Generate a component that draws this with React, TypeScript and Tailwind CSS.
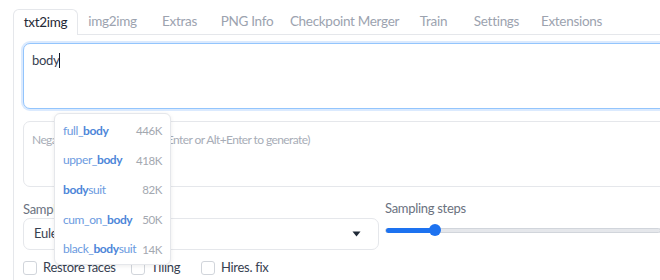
import { useState } from 'react';

const tabs = [
  { name: 'img2img', w: 'w-[69px]' },
  { name: 'Extras', w: 'w-[65px]' },
  { name: 'PNG Info', w: 'w-[70px]' },
  { name: 'Checkpoint Merger', w: 'w-[125px]' },
  { name: 'Train', w: 'w-[53px]' },
  { name: 'Settings', w: 'w-[73px]' },
  { name: 'Extensions', w: 'w-[77px]' },
];

const suggestions = [
  { pre: 'full_', hit: 'body', post: '', count: '446K' },
  { pre: 'upper_', hit: 'body', post: '', count: '418K' },
  { pre: '', hit: 'body', post: 'suit', count: '82K' },
  { pre: 'cum_on_', hit: 'body', post: '', count: '50K' },
  { pre: 'black_', hit: 'body', post: 'suit', count: '14K' },
];

export default function App() {
  const [prompt] = useState('body');

  return (
    <div className="relative w-[660px] h-[280px] overflow-hidden bg-white text-[13px] tracking-[-0.3px] text-[#374151]" style={{ fontFamily: '"Source Sans Pro", Lato, "Noto Sans", sans-serif' }}>
      {/* Tabs */}
      <div className="flex items-end pl-[13px] pt-[9px] w-[900px]">
        <div className="w-[65px] h-[26px] flex items-center justify-center border border-b-0 border-[#e5e7eb] rounded-t-[6px] bg-white text-[#1f2937] text-[13.5px]">
          txt2img
        </div>
        <div className="flex-1 flex items-center h-[26px] border-b border-[#e5e7eb] text-[#9ca3af] text-[13.5px]">
          {tabs.map((t) => (
            <div key={t.name} className={`${t.w} text-center shrink-0`}>{t.name}</div>
          ))}
        </div>
      </div>

      {/* Panel */}
      <div className="ml-[13px] w-[900px] border-l border-[#e5e7eb] pl-[9px] pt-2 h-[260px]">
        <div className="h-[66px] rounded-[7px] border border-[#93c5fd] shadow-[0_0_0_2px_#dbeafe] bg-white px-2 pt-[7px]">
          <span className="text-[#374151]">{prompt}</span>
          <span className="inline-block w-px h-[15px] bg-[#111827] align-[-3px]" />
        </div>

        <div className="mt-[12px] h-[66px] rounded-[7px] border border-[#e5e7eb] bg-white px-2 pt-[9px] text-[12px] tracking-[-0.6px] text-[#a8adb7]">
          Negative prompt (press Ctrl+Enter or Alt+Enter to generate)
        </div>

        <div className="mt-[15px] flex gap-[6px] w-[638px]">
          <div className="w-[356px]">
            <div className="text-[#6b7280] leading-[15px]">Sampling method</div>
            <div className="mt-px h-[32px] rounded-[7px] border border-[#e5e7eb] flex items-center justify-between pl-[10px] pr-[17px]">
              <span>Euler a</span>
              <svg width="9" height="6" viewBox="0 0 9 6"><path d="M0.5 0.5 L8.5 0.5 L4.5 5.5 Z" fill="#1f2937" /></svg>
            </div>
          </div>
          <div className="flex-1">
            <div className="text-[#6b7280] leading-[15px] -mt-[1px]">Sampling steps</div>
            <div className="relative mt-[12px] h-[5px] rounded-full bg-[#e5e7eb] border border-[#d1d5db]">
              <div className="absolute left-0 top-[-1px] h-[5px] w-[49px] rounded-full bg-[#1d72f0]" />
              <div className="absolute left-[43px] top-[-5px] w-[12px] h-[12px] rounded-full bg-[#1d72f0]" />
            </div>
          </div>
        </div>

        <div className="mt-[8px] flex items-center">
          <label className="w-[108px] flex items-center gap-[6px]">
            <span className="w-[14px] h-[14px] rounded-[3px] border border-[#d1d5db] bg-white" />
            <span>Restore faces</span>
          </label>
          <label className="w-[70px] flex items-center gap-[6px]">
            <span className="w-[14px] h-[14px] rounded-[3px] border border-[#d1d5db] bg-white" />
            <span>Tiling</span>
          </label>
          <label className="flex items-center gap-[6px]">
            <span className="w-[14px] h-[14px] rounded-[3px] border border-[#d1d5db] bg-white" />
            <span>Hires. fix</span>
          </label>
        </div>
      </div>

      {/* Autocomplete popup */}
      <div className="absolute left-[54px] top-[113px] w-[117px] h-[152px] rounded-[6px] border border-[#e5e7eb] bg-white shadow-[0_1px_4px_rgba(0,0,0,0.08)] flex flex-col justify-around pt-[2px]">
        {suggestions.map((s) => (
          <div key={s.pre + s.post} className="flex items-center justify-between pl-[8px] pr-[8px] text-[12px] tracking-[-0.4px]">
            <span className="text-[#6b9ae0]">
              {s.pre}
              <b className="font-bold text-[#4d86d9]">{s.hit}</b>
              {s.post}
            </span>
            <span className="text-[#a3a8b0] text-[11.5px]">{s.count}</span>
          </div>
        ))}
      </div>
    </div>
  );
}
